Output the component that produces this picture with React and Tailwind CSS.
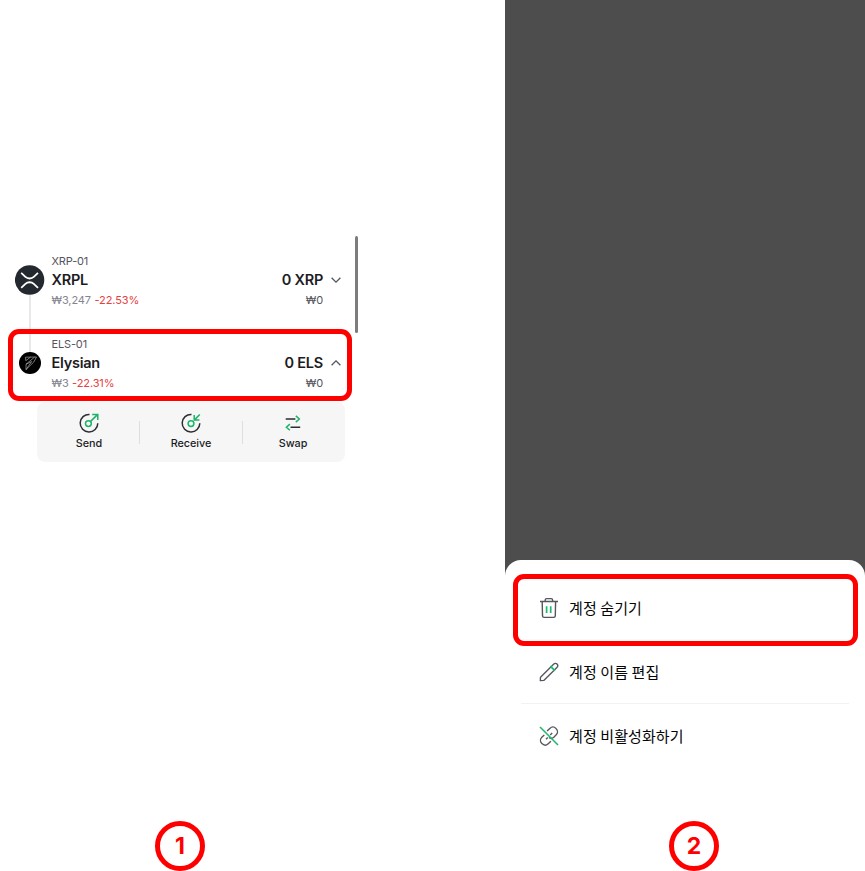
import React from "react";

function XrpLogo() {
  return (
    <svg width="30" height="30" viewBox="0 0 30 30" fill="none">
      <circle cx="14.6" cy="15" r="14.7" fill="#23292f" />
      <path d="M6.2 7.9 L10.4 11.9 C12.7 14 16.5 14 18.8 11.9 L23 7.9 M6.2 22.8 L10.4 18.8 C12.7 16.7 16.5 16.7 18.8 18.8 L23 22.8" stroke="#fff" strokeWidth="1.8" />
    </svg>
  );
}

function ElysianLogo() {
  return (
    <svg className="-ml-px" width="22" height="22" viewBox="0 0 22 22" fill="none">
      <circle cx="11" cy="11" r="11" fill="#000" />
      <path d="M6.5 5.2 L17.5 5 L14.8 10 L7 17.6 V12.2 L15.5 5.2 M6.5 5.2 L6.8 8.7 L11.4 5.2 M7 12.2 L12.6 9.6 L7 17.6" stroke="#b5b5b5" strokeWidth="0.65" />
    </svg>
  );
}

function Chevron({ up }) {
  return (
    <svg width="10" height="6" viewBox="0 0 10 6" fill="none">
      <path d={up ? "M.6 5.3 L5 .9 L9.4 5.3" : "M.6 .7 L5 5.1 L9.4 .7"} stroke="#55555d" strokeWidth="1.3" />
    </svg>
  );
}

function SendIcon() {
  return (
    <svg width="20" height="20" viewBox="0 0 20 20" fill="none" strokeWidth="1.5">
      <path d="M10.5 1.4 A8.8 8.8 0 1 0 18.8 10.2" stroke="#2e2e32" />
      <circle cx="9.4" cy="10.6" r="2.9" stroke="#1db368" />
      <path d="M11.6 8.4 L18.2 1.9 M13.2 1.5 H18.8 V7" stroke="#1db368" />
    </svg>
  );
}

function ReceiveIcon() {
  return (
    <svg width="20" height="20" viewBox="0 0 20 20" fill="none" strokeWidth="1.5">
      <path d="M10.5 1.4 A8.8 8.8 0 1 0 18.8 10.2" stroke="#2e2e32" />
      <circle cx="10" cy="10.6" r="2.9" stroke="#1db368" />
      <path d="M18.8 1.5 L13.7 6.6 M13.2 2 V7.1 H18.4" stroke="#1db368" />
    </svg>
  );
}

function SwapIcon() {
  return (
    <svg width="20" height="20" viewBox="0 0 20 20" fill="none" strokeWidth="1.5">
      <path d="M2.7 6 H12.4 M7.5 14.2 H17.2" stroke="#2e2e32" />
      <path d="M12.8 2.9 L16.3 6 L12.8 9.1 M6.9 11.1 L3.4 14.2 L6.9 17.3" stroke="#1db368" />
    </svg>
  );
}

function TrashIcon() {
  return (
    <svg width="20" height="22" viewBox="0 0 20 22" fill="none" strokeWidth="1.4">
      <path d="M1 4.5 H19 M6.2 4.3 V3 Q6.2 1.6 7.6 1.6 H12.2 Q13.6 1.6 13.6 3 V4.3 M3.2 4.5 L3.5 18.9 Q3.6 20.4 5.1 20.4 H14.7 Q16.2 20.4 16.3 18.9 L16.6 4.5" stroke="#55555d" />
      <path d="M7.6 9.2 V16 M11.7 9.2 V16" stroke="#1dba70" strokeWidth="1.7" />
    </svg>
  );
}

function PencilIcon() {
  return (
    <svg width="20" height="20" viewBox="0 0 20 20" fill="none" strokeWidth="1.35">
      <path d="M1.3 18.6 L1.5 15.2 L14.6 2.2 C15.6 1.1 17 1 18 2 C19 3 18.9 4.4 17.9 5.4 L4.8 18.4 Z" stroke="#55555d" strokeLinejoin="round" />
      <path d="M11.4 4.2 L15.8 8.6" stroke="#1dba70" strokeWidth="1.8" />
    </svg>
  );
}

function UnlinkIcon() {
  return (
    <svg width="20" height="20" viewBox="0 0 20 20" fill="none" strokeWidth="1.35">
      <path d="M8.1 5 L10.8 2.4 C12.6 .7 15.2 .6 17 2.4 C19 4.3 18.9 7 17.2 8.8 L14.8 11.2 C13.4 12.4 11.5 12.5 9.9 11.5 M11.9 15.3 L9.2 17.8 C7.4 19.4 4.7 19.4 2.9 17.6 C1.1 15.8 1 13.1 2.8 11.3 L5.3 8.9 M7 13.2 L8.8 11.4 M11.2 8.9 L13.2 6.9" stroke="#55555d" />
      <path d="M1 1 L19 19" stroke="#1dba70" strokeWidth="1.6" />
    </svg>
  );
}

function AccountRow({ logo, label, name, price, change, amount, up }) {
  return (
    <div className="flex h-[83px] items-center">
      <div className="flex w-[30px] justify-center">{logo}</div>
      <div className="ml-[6.5px] flex-1 whitespace-nowrap">
        <div className="h-[17px] text-[11px] leading-[19px] tracking-[-0.15px] text-[#55555d]">{label}</div>
        <div className="h-[21px] text-[14.5px] font-semibold leading-[21px] tracking-[-0.25px] text-[#1c1c1f]">{name}</div>
        <div className="h-[18px] text-[11px] leading-[20px] tracking-[-0.1px] text-[#858590]">
          {price} <span className="ml-[0.5px] text-[#e5403f]">{change}</span>
        </div>
      </div>
      <div className="whitespace-nowrap text-right">
        <div className="h-[17px]" />
        <div className="h-[21px] text-[14.5px] font-semibold leading-[21px] tracking-[-0.25px] text-[#1c1c1f]">{amount}</div>
        <div className="h-[18px] text-[11px] leading-[20px] tracking-[-0.1px] text-[#55555d]">₩0</div>
      </div>
      <div className="ml-2"><Chevron up={up} /></div>
    </div>
  );
}

function Action({ icon, label }) {
  return (
    <div className="flex w-[102px] flex-col items-center">
      {icon}
      <span className="mt-[2px] h-4 text-[10.8px] font-medium leading-[18px] tracking-[-0.05px] text-[#1c1c1f]">{label}</span>
    </div>
  );
}

function MenuItem({ icon, label }) {
  return (
    <div className="flex h-16 items-center pl-[18px]">
      <div className="flex w-5 justify-center">{icon}</div>
      <span className="ml-[10px] font-['Noto_Sans_CJK_KR',sans-serif] text-[15px] font-normal leading-6 tracking-[0.1px] text-[#050506]">{label}</span>
    </div>
  );
}

function Step({ children }) {
  return (
    <div className="flex h-[50px] w-[50px] items-center justify-center rounded-full border-[5px] border-[#ff0000] text-[23px] font-bold text-[#ff0000]">
      {children}
    </div>
  );
}

export default function App() {
  return (
    <div className="flex h-[871px] w-[865px] overflow-hidden bg-white font-['Inter','Noto_Sans_CJK_KR',sans-serif]">
      <section className="flex w-[505px] flex-col">
        <div className="mt-[236px] flex h-[226px] w-[358px]">
          <div className="flex w-[341px] flex-col pl-[15px] pt-[2px]">
            <div className="relative">
              <div className="absolute left-[14px] top-[57px] h-[60px] w-[2px] bg-[#e9e9ea]" />
              <div className="relative">
                <AccountRow logo={<XrpLogo />} label="XRP-01" name="XRPL" price="₩3,247" change="-22.53%" amount="0 XRP" />
                <AccountRow logo={<ElysianLogo />} label="ELS-01" name="Elysian" price="₩3" change="-22.31%" amount="0 ELS" up />
              </div>
              <div className="absolute left-[-7px] top-[91px] h-[72px] w-[344px] rounded-[11px] border-[5px] border-[#ff0000]" />
            </div>
            <div className="-mr-1 ml-[22px] mt-[-2px] flex h-[60px] items-center rounded-lg bg-[#f6f6f6] pl-px">
              <Action icon={<SendIcon />} label="Send" />
              <div className="-ml-px h-[23px] w-px bg-[#dedee0]" />
              <Action icon={<ReceiveIcon />} label="Receive" />
              <div className="h-[23px] w-px bg-[#dedee0]" />
              <div className="-ml-px"><Action icon={<SwapIcon />} label="Swap" /></div>
            </div>
          </div>
          <div className="ml-auto mr-[0.5px] h-[97px] w-[3px] rounded-full bg-[#7d7d7d]" />
        </div>
        <div className="ml-[155px] mt-[359px]"><Step>1</Step></div>
      </section>
      <section className="w-[360px]">
        <div className="h-[762px] bg-[#4d4d4d] pt-[560px]">
          <div className="h-full rounded-t-[16px] bg-white px-4 pt-4">
            <div className="relative">
              <MenuItem icon={<TrashIcon />} label="계정 숨기기" />
              <div className="absolute left-[-8px] top-[-2px] h-[72px] w-[345px] rounded-[11px] border-[5px] border-[#ff0000]" />
            </div>
            <div className="relative">
              <MenuItem icon={<PencilIcon />} label="계정 이름 편집" />
              <div className="absolute bottom-0 left-0 h-px w-[328px] bg-[#f2f2f3]" />
            </div>
            <MenuItem icon={<UnlinkIcon />} label="계정 비활성화하기" />
          </div>
        </div>
        <div className="ml-[164px] mt-[59px]"><Step>2</Step></div>
      </section>
    </div>
  );
}
